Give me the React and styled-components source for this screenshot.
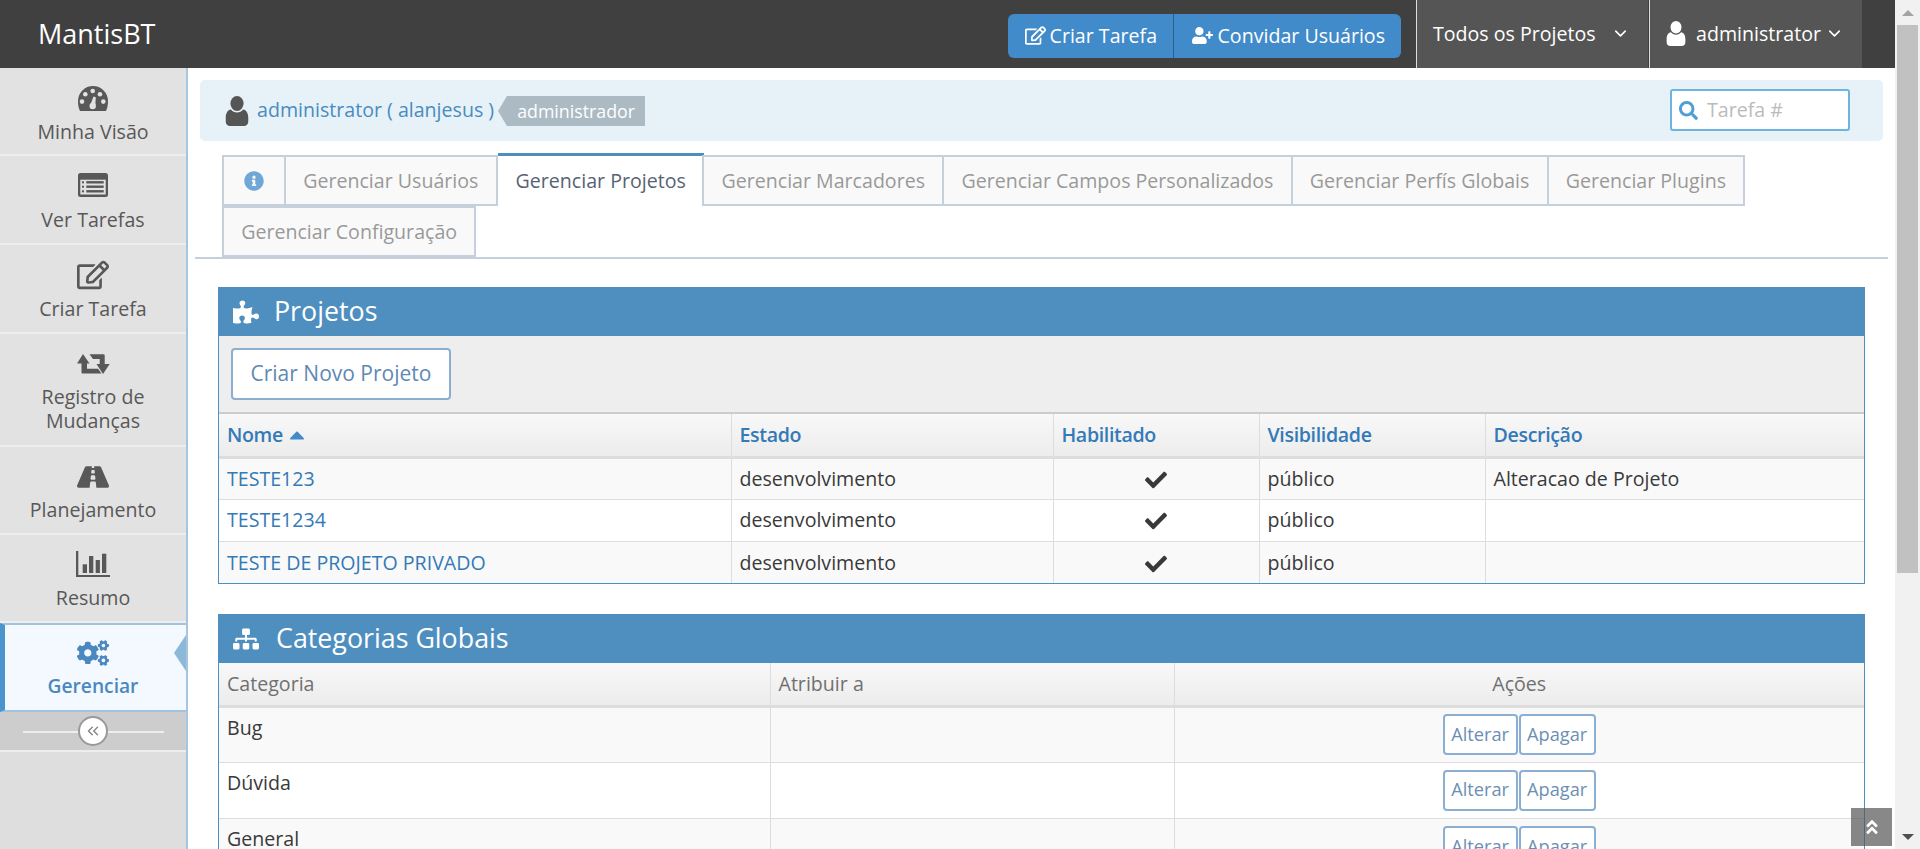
import React from "react";
import styled, { createGlobalStyle } from "styled-components";
import {
  FaRegEdit,
  FaRoad,
  FaCogs,
  FaUserPlus,
  FaInfoCircle,
  FaSearch,
  FaCheck,
  FaPuzzlePiece,
  FaSitemap,
  FaAngleDoubleUp,
  FaCaretUp,
} from "react-icons/fa";
import { FiChevronDown, FiChevronsLeft } from "react-icons/fi";

const GlobalStyle = createGlobalStyle`
  * { box-sizing: border-box; }
  html, body { margin: 0; padding: 0; height: 100%; overflow: hidden; }
  body {
    font-family: "Open Sans", sans-serif;
    font-size: 19.6px;
    line-height: 1.5;
    color: #393939;
    background: #fff;
  }
`;

const Shell = styled.div`
  display: flex;
  height: 100vh;
  overflow: hidden;
`;

const Page = styled.div`
  flex: 1;
  min-width: 0;
  display: flex;
  flex-direction: column;
`;

const Navbar = styled.header`
  height: 68px;
  flex: none;
  display: flex;
  align-items: stretch;
  background: #404040;
  color: #fff;
  padding-right: 33px;
`;

const Brand = styled.div`
  font-size: 27px;
  line-height: 67px;
  padding-left: 38px;
  margin-right: auto;
`;

const ButtonGroup = styled.div`
  display: flex;
  align-self: center;
  height: 44px;
  margin: 3px 14px 0 0;
  border-radius: 6px;
  overflow: hidden;
  background: #428bca;
`;

const NavButton = styled.div`
  display: flex;
  align-items: center;
  gap: 4px;
  padding: 0 16px 0 17px;
  white-space: nowrap;
  & + & { border-left: 1px solid #2f5f88; gap: 5px; padding-left: 17.5px; }
  svg { font-size: 21px; flex: none; }
`;

const NavDropdown = styled.div`
  display: flex;
  align-items: center;
  width: ${(p) => p.$width}px;
  padding: 0 18px 1px 16px;
  margin-left: 1px;
  background: #555;
  white-space: nowrap;
  border-left: 1px solid #ddd;
`;

const Chevron = styled(FiChevronDown)`
  margin-left: auto;
  font-size: 19px;
`;

const UserShape = styled.svg`
  flex: none;
  width: ${(p) => p.$width}px;
  height: ${(p) => p.$height}px;
  margin-right: ${(p) => p.$gap}px;
  fill: ${(p) => p.$color};
`;

const Body = styled.div`
  flex: 1;
  min-height: 0;
  display: flex;
`;

const Sidebar = styled.nav`
  width: 188px;
  flex: none;
  background: #dedede;
  border-right: 2px solid #a5c5e0;
`;

const NavItem = styled.div`
  position: relative;
  height: ${(p) => p.$height}px;
  display: flex;
  flex-direction: column;
  align-items: center;
  padding: ${(p) => (p.$active ? "12px 11px 0 6px" : "14px 6px 0")};
  text-align: center;
  line-height: 24px;
  font-size: ${(p) => (p.$active ? 19.2 : 19.6)}px;
  color: ${(p) => (p.$active ? "#4b88bf" : "#585858")};
  font-weight: ${(p) => (p.$active ? 600 : 400)};
  background: ${(p) => (p.$active ? "#f3f9fe" : "#e2e2e2")};
  border-bottom: 2px solid ${(p) => (p.$active ? "#a0c3e0" : "#eeeeee")};
  ${(p) => p.$active && "border-left: 5px solid #4b95cf; border-top: 2px solid #a0c3e0;"}
`;

const NavIcon = styled.span`
  height: 32px;
  flex: none;
  margin-bottom: ${(p) => (p.$tight ? 4.5 : 5.5)}px;
  display: flex;
  align-items: center;
  font-size: 32px;
  color: ${(p) => (p.$active ? "#4b88bf" : "#585858")};
`;

const GlyphSvg = styled.svg`
  display: block;
  fill: currentColor;
  width: ${(p) => p.$width}px;
  height: ${(p) => p.$height}px;
  margin-top: ${(p) => p.$shift || 0}px;
`;

const ActiveArrow = styled.span`
  position: absolute;
  right: 0;
  top: 10px;
  border-style: solid;
  border-width: 18px 12px 18px 0;
  border-color: transparent #8db8d8 transparent transparent;
`;

const ToggleRow = styled.div`
  position: relative;
  height: 40px;
  display: flex;
  align-items: center;
  justify-content: center;
  background: #cdcdcd;
  border-bottom: 2px solid #eeeeee;
  &::before {
    content: "";
    position: absolute;
    left: 23px;
    right: 22px;
    top: 19px;
    height: 2px;
    background: #eeeeee;
  }
`;

const ToggleCircle = styled.span`
  position: relative;
  width: 30px;
  height: 30px;
  border-radius: 50%;
  background: #fff;
  border: 2px solid #999;
  display: flex;
  align-items: center;
  justify-content: center;
  color: #888;
  font-size: 18px;
`;

const Main = styled.main`
  position: relative;
  flex: 1;
  min-width: 0;
  overflow: hidden;
  padding-top: 12px;
`;

const InfoBar = styled.div`
  height: 61px;
  margin: 0 12px;
  padding: 0 33px 0 25px;
  border-radius: 5px;
  background: #e6f1f8;
  display: flex;
  align-items: center;
`;

const UserLink = styled.a`
  color: #4a8bc0;
  white-space: nowrap;
  margin-top: -2px;
`;

const Tag = styled.span`
  position: relative;
  margin-left: 13px;
  height: 30px;
  line-height: 30px;
  padding: 0 10px;
  background: #abbac3;
  color: #fff;
  font-size: 17.8px;
  white-space: nowrap;
  &::before {
    content: "";
    position: absolute;
    left: -9px;
    top: 0;
    border-style: solid;
    border-width: 15px 9px 15px 0;
    border-color: transparent #abbac3 transparent transparent;
  }
`;

const Search = styled.div`
  margin-left: auto;
  margin-top: -1px;
  width: 180px;
  height: 42px;
  border: 2px solid #6fb3e0;
  border-radius: 3px;
  background: #fff;
  display: flex;
  align-items: center;
  gap: 9px;
  padding-left: 7px;
  color: #bbb;
  svg { color: #4f9fd6; font-size: 19px; }
`;

const Tabs = styled.div`
  display: flex;
  flex-wrap: wrap;
  margin: 14px 7px 0;
  padding-left: 29px;
  border-bottom: 2px solid #c5d0dc;
`;

const Tab = styled.div`
  height: 51px;
  margin-left: -2px;
  padding: 0 17.2px;
  display: flex;
  align-items: center;
  white-space: nowrap;
  background: #f9f9f9;
  color: #999;
  border: 2px solid #c5d0dc;
  svg { color: #6fa8d6; font-size: 20px; }
`;

const InfoTab = styled(Tab)`
  padding: 0 20px;
`;

const ActiveTab = styled(Tab)`
  height: 53px;
  margin: -2px 0.5px 0 0;
  padding: 0 18px;
  background: #fff;
  color: #576373;
  border-width: 3px 0 0;
  border-top-color: #4c8fbd;
`;

const Content = styled.div`
  padding: 28px 30px 0;
`;

const Widget = styled.section`
  border: 1px solid #4f8fbf;
  margin-bottom: 30px;
`;

const WidgetHeader = styled.div`
  height: 49px;
  margin: -1px -1px 0;
  background: #4f8fbf;
  color: #fff;
  display: flex;
  align-items: center;
  padding-left: 15px;
  gap: ${(p) => p.$gap}px;
  font-size: 26.8px;
  svg { font-size: 26px; flex: none; }
`;

const Toolbar = styled.div`
  height: 76px;
  background: #eeeeee;
  padding: 12px 12px 0;
`;

const OutlineButton = styled.span`
  display: inline-flex;
  align-items: center;
  justify-content: center;
  background: #fff;
  border: 2px solid #8aafd2;
  border-radius: 4px;
  color: ${(p) => (p.$small ? "#6b8fb3" : "#5f89b3")};
  height: ${(p) => (p.$small ? 41 : 52)}px;
  padding: 0 ${(p) => (p.$small ? 6.5 : 17.5)}px;
  font-size: ${(p) => (p.$small ? 18.2 : 21)}px;
`;

const Table = styled.table`
  width: 100%;
  border-collapse: collapse;
  table-layout: fixed;
`;

const Th = styled.th`
  height: ${(p) => p.$height}px;
  padding: 0 8px;
  font-weight: ${(p) => (p.$link ? 600 : 400)};
  letter-spacing: ${(p) => (p.$link ? "-0.35px" : "0")};
  text-align: ${(p) => (p.$center ? "center" : "left")};
  color: ${(p) => (p.$link ? "#337ab7" : "#707070")};
  background: linear-gradient(#f8f8f8, #ececec);
  border-left: 1px solid #ddd;
  border-bottom: 3px solid #ddd;
  ${(p) => p.$topline && "border-top: 2px solid #ccc;"}
  &:first-child { border-left: 0; }
  svg { color: #428bca; font-size: 24px; vertical-align: -5px; margin-left: 2px; }
`;

const Tr = styled.tr`
  background: ${(p) => (p.$odd ? "#f9f9f9" : "#fff")};
`;

const Td = styled.td`
  height: ${(p) => p.$height}px;
  padding: ${(p) => (p.$top ? "5px 8px 0" : "0 8px")};
  vertical-align: ${(p) => (p.$top ? "top" : "middle")};
  text-align: ${(p) => (p.$center ? "center" : "left")};
  border-left: 1px solid #ddd;
  border-top: 1px solid #ddd;
  &:first-child { border-left: 0; }
  a { color: #337ab7; }
  svg { font-size: 22px; color: #393939; vertical-align: -5px; }
`;

const ActionRow = styled.div`
  display: flex;
  justify-content: center;
  gap: 1px;
`;

const ScrollTop = styled.div`
  position: absolute;
  right: 3px;
  bottom: 3px;
  width: 41px;
  height: 38px;
  background: rgba(85, 85, 85, 0.7);
  color: #fff;
  display: flex;
  align-items: center;
  justify-content: center;
  font-size: 18px;
`;

const ScrollTrack = styled.div`
  width: 25px;
  flex: none;
  background: #f1f1f1;
  display: flex;
  flex-direction: column;
  align-items: center;
`;

const ScrollArrow = styled.div`
  height: 25px;
  flex: none;
  display: flex;
  align-items: center;
  justify-content: center;
  ${(p) => p.$end && "margin-top: auto;"}
  &::before {
    content: "";
    border-style: solid;
    border-color: transparent;
    border-width: ${(p) => (p.$end ? "6px 6px 0" : "0 6px 6px")};
    ${(p) => (p.$end ? "border-top-color: #505050;" : "border-bottom-color: #a3a3a3;")}
  }
`;

const ScrollThumb = styled.div`
  width: 21px;
  height: 548px;
  background: #c1c1c1;
`;

const UserIcon = ({ width, height, gap, color }) => (
  <UserShape viewBox="0 0 24 32" $width={width} $height={height} $gap={gap} $color={color}>
    <ellipse cx="12" cy="8" rx="7" ry="8" />
    <path d="M5.5 14.5C7 16.5 9.4 17.6 12 17.6s5-1.1 6.5-3.1C21.8 15.2 24 18 24 23.5v4C24 30 22 32 19.5 32h-15C2 32 0 30 0 27.500v-4C0 18 2.200 15.200 5.500 14.500z" />
  </UserShape>
);

// the sidebar glyphs below follow the older, heavier icon set of the screenshot
const GaugeIcon = () => (
  <GlyphSvg viewBox="0 0 30 25" $width={30} $height={25}>
    <path d="M2 25C.6 22 0 19 0 15a15 15 0 0 1 30 0c0 4-.6 7-2 10z" />
    <g fill="#e2e2e2">
      <circle cx="4" cy="15.600" r="2.300" />
      <circle cx="7.300" cy="8.300" r="2.300" />
      <circle cx="14.700" cy="5" r="2.300" />
      <circle cx="22" cy="8.300" r="2.300" />
      <circle cx="25.300" cy="15.600" r="2.300" />
      <circle cx="14.700" cy="20" r="3.200" />
      <path d="M12.500 18.500L15.500 10.500 17.800 11.200 17.300 20z" />
    </g>
  </GlyphSvg>
);

const ListIcon = () => (
  <GlyphSvg viewBox="0 0 30 24" $width={30} $height={24} $shift={-2}>
    <rect width="30" height="24" rx="2.500" />
    <rect x="2.300" y="6.700" width="25.400" height="14.800" fill="#e2e2e2" />
    <rect x="4" y="8.300" width="2" height="2" />
    <rect x="4" y="12.700" width="2" height="2" />
    <rect x="4" y="17.300" width="2" height="2" />
    <rect x="8.300" y="8.100" width="17.400" height="2.400" />
    <rect x="8.300" y="12.500" width="17.400" height="2.400" />
    <rect x="8.300" y="17.100" width="17.400" height="2.400" />
  </GlyphSvg>
);

const RetweetIcon = () => (
  <GlyphSvg viewBox="0 0 33 20" $width={33} $height={20} $shift={-1}>
    <path d="M6 0l6.500 9.500H10v5.300h11l3.500 4.700h-19q-1 0-1-1v-9H0z" />
    <path d="M12.500.3h14q1.200 0 1.200 1.200V10h5L26 20l-6.500-10h3.200V5H16z" />
  </GlyphSvg>
);

const ChartIcon = () => (
  <GlyphSvg viewBox="0 0 34 26" $width={34} $height={26} $shift={-2}>
    <path d="M0 0h2.300v24H34v2H0z" />
    <rect x="6.700" y="13.300" width="4.300" height="8.700" />
    <rect x="13" y="5" width="4.300" height="17" />
    <rect x="19.700" y="9" width="4.200" height="13" />
    <rect x="26" y="2.700" width="4.300" height="19.300" />
  </GlyphSvg>
);

const menu = [
  { label: "Minha Visão", icon: <GaugeIcon />, height: 88 },
  { label: "Ver Tarefas", icon: <ListIcon />, height: 89 },
  { label: "Criar Tarefa", icon: <FaRegEdit />, height: 89 },
  { label: "Registro de Mudanças", icon: <RetweetIcon />, height: 113, tight: true },
  { label: "Planejamento", icon: <FaRoad />, height: 88, tight: true },
  { label: "Resumo", icon: <ChartIcon />, height: 88, tight: true },
];

const tabs = [
  "Gerenciar Usuários",
  "Gerenciar Projetos",
  "Gerenciar Marcadores",
  "Gerenciar Campos Personalizados",
  "Gerenciar Perfís Globais",
  "Gerenciar Plugins",
  "Gerenciar Configuração",
];

const projects = [
  { name: "TESTE123", description: "Alteracao de Projeto" },
  { name: "TESTE1234", description: "" },
  { name: "TESTE DE PROJETO PRIVADO", description: "" },
];

const categories = ["Bug", "Dúvida", "General"];

export default function App() {
  return (
    <Shell>
      <GlobalStyle />
      <Page>
        <Navbar>
          <Brand>MantisBT</Brand>
          <ButtonGroup>
            <NavButton>
              <FaRegEdit />
              Criar Tarefa
            </NavButton>
            <NavButton>
              <FaUserPlus />
              Convidar Usuários
            </NavButton>
          </ButtonGroup>
          <NavDropdown $width={232}>
            Todos os Projetos
            <Chevron />
          </NavDropdown>
          <NavDropdown $width={213}>
            <UserIcon width={20} height={25} gap={10} color="#fff" />
            administrator
            <Chevron />
          </NavDropdown>
        </Navbar>
        <Body>
          <Sidebar>
            {menu.map((item) => (
              <NavItem key={item.label} $height={item.height}>
                <NavIcon $tight={item.tight}>{item.icon}</NavIcon>
                {item.label}
              </NavItem>
            ))}
            <NavItem $active $height={89}>
              <NavIcon $active $tight>
                <FaCogs />
              </NavIcon>
              Gerenciar
              <ActiveArrow />
            </NavItem>
            <ToggleRow>
              <ToggleCircle>
                <FiChevronsLeft />
              </ToggleCircle>
            </ToggleRow>
          </Sidebar>
          <Main>
            <InfoBar>
              <UserIcon width={24} height={30} gap={8} color="#555" />
              <UserLink>administrator ( alanjesus )</UserLink>
              <Tag>administrador</Tag>
              <Search>
                <FaSearch />
                Tarefa #
              </Search>
            </InfoBar>
            <Tabs>
              <InfoTab>
                <FaInfoCircle />
              </InfoTab>
              {tabs.map((tab) =>
                tab === "Gerenciar Projetos" ? (
                  <ActiveTab key={tab}>{tab}</ActiveTab>
                ) : (
                  <Tab key={tab}>{tab}</Tab>
                )
              )}
            </Tabs>
            <Content>
              <Widget>
                <WidgetHeader $gap={15}>
                  <FaPuzzlePiece />
                  Projetos
                </WidgetHeader>
                <Toolbar>
                  <OutlineButton>Criar Novo Projeto</OutlineButton>
                </Toolbar>
                <Table>
                  <colgroup>
                    <col style={{ width: 512 }} />
                    <col style={{ width: 322 }} />
                    <col style={{ width: 206 }} />
                    <col style={{ width: 226 }} />
                    <col />
                  </colgroup>
                  <thead>
                    <tr>
                      <Th $link $topline $height={44}>
                        Nome
                        <FaCaretUp />
                      </Th>
                      <Th $link $topline $height={44}>Estado</Th>
                      <Th $link $topline $height={44}>Habilitado</Th>
                      <Th $link $topline $height={44}>Visibilidade</Th>
                      <Th $link $topline $height={44}>Descrição</Th>
                    </tr>
                  </thead>
                  <tbody>
                    {projects.map((project, i) => (
                      <Tr key={project.name} $odd={i % 2 === 0}>
                        <Td $height={42}>
                          <a>{project.name}</a>
                        </Td>
                        <Td>desenvolvimento</Td>
                        <Td $center>
                          <FaCheck />
                        </Td>
                        <Td>público</Td>
                        <Td>{project.description}</Td>
                      </Tr>
                    ))}
                  </tbody>
                </Table>
              </Widget>
              <Widget>
                <WidgetHeader $gap={17}>
                  <FaSitemap />
                  Categorias Globais
                </WidgetHeader>
                <Table>
                  <colgroup>
                    <col style={{ width: 551 }} />
                    <col style={{ width: 404 }} />
                    <col />
                  </colgroup>
                  <thead>
                    <tr>
                      <Th $height={43}>Categoria</Th>
                      <Th $height={43}>Atribuir a</Th>
                      <Th $center $height={43}>Ações</Th>
                    </tr>
                  </thead>
                  <tbody>
                    {categories.map((category, i) => (
                      <Tr key={category} $odd={i % 2 === 0}>
                        <Td $top $height={56}>{category}</Td>
                        <Td />
                        <Td>
                          <ActionRow>
                            <OutlineButton $small>Alterar</OutlineButton>
                            <OutlineButton $small>Apagar</OutlineButton>
                          </ActionRow>
                        </Td>
                      </Tr>
                    ))}
                  </tbody>
                </Table>
              </Widget>
            </Content>
            <ScrollTop>
              <FaAngleDoubleUp />
            </ScrollTop>
          </Main>
        </Body>
      </Page>
      <ScrollTrack>
        <ScrollArrow />
        <ScrollThumb />
        <ScrollArrow $end />
      </ScrollTrack>
    </Shell>
  );
}
